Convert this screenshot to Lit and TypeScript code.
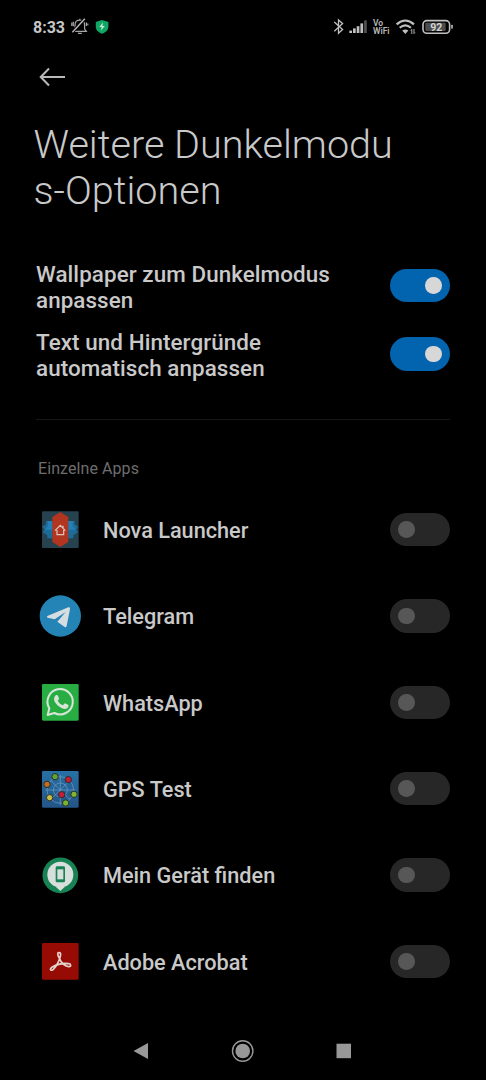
import { LitElement, html, css, svg } from 'lit';
import { customElement, property, state } from 'lit/decorators.js';
import { classMap } from 'lit/directives/class-map.js';

const novaIcon = svg`
  <rect x="36" y="34" width="110" height="110" rx="3" fill="#27424f" />
  <path d="M48 63H68V115H52V106L37 96L44 89L37 80L48 73Z" fill="#1c6b98" />
  <path d="M53 63H68V89H44L54 78Z" fill="#2380b6" />
  <path d="M134 63H112V115H130V106L144 96L138 89L144 80L134 73Z" fill="#1c6b98" />
  <path d="M129 63H112V89H138L128 78Z" fill="#2380b6" />
  <path d="M91 36L115 51V126L91 141L67 126V51Z" fill="#b23520" />
  <path d="M75 92L91 76L106 92M81 90V104H101V90M99 84V77" fill="none" stroke="#ddc5bd" stroke-width="3.6" />
`;

const telegramIcon = svg`
  <circle cx="91" cy="90" r="62" fill="#2484b5" />
  <path d="M52 90L115 64Q121 62 120 69L110 120Q108 126 103 122L82 107L107 78L74 100L53 95Q49 93 52 90Z" fill="#d5dde1" />
`;

const whatsappIcon = svg`
  <rect x="36" y="36" width="110" height="110" rx="4" fill="#28ad43" />
  <path d="M53 129L58 109A38 38 0 1 1 73 123Z" fill="none" stroke="#d7e5d9" stroke-width="6" stroke-linejoin="round" />
  <path d="M77 70C80 68 83 69 84 72L87 79Q88 81 83 86Q88 96 99 100L103 95Q105 93 108 95L114 98Q117 100 115 104C111 113 100 112 91 106C82 101 73 91 72 82Q72 74 77 70Z" fill="#d7e5d9" />
`;

const satellites = [
  { x: 75, y: 53, fill: '#65a52f' },
  { x: 115, y: 62, fill: '#c61e38' },
  { x: 51, y: 76, fill: '#c66c1e' },
  { x: 95, y: 107, fill: '#c61e38' },
  { x: 132, y: 106, fill: '#80b52e' },
  { x: 59, y: 116, fill: '#c8bd45' },
  { x: 107, y: 132, fill: '#78b52e' },
];

const gpsIcon = svg`
  <defs>
    <linearGradient id="sky" x1="0" y1="0" x2="0" y2="1">
      <stop offset="0" stop-color="#2771a5" />
      <stop offset="1" stop-color="#235487" />
    </linearGradient>
  </defs>
  <rect x="36" y="36" width="110" height="110" rx="4" fill="url(#sky)" />
  <g fill="none" stroke="#709fc4" stroke-width="2">
    <circle cx="91" cy="93" r="40" />
    <circle cx="91" cy="93" r="21" />
    <path d="M91 48V138M46 93H136M63 65L119 121M119 65L63 121" />
  </g>
  ${satellites.map((s) => svg`<circle cx=${s.x} cy=${s.y} r="9.5" fill=${s.fill} stroke="#292f28" stroke-width="3" />`)}
`;

const findDeviceIcon = svg`
  <circle cx="91" cy="91" r="53.5" fill="#178354" />
  <path d="M77 125L91 138L105 125Z" fill="#d8dedb" />
  <circle cx="91" cy="89" r="39" fill="#d8dedb" />
  <rect x="77" y="64" width="28" height="48" rx="4" fill="#178354" />
  <rect x="82" y="73" width="18" height="30" fill="#d8dedb" />
`;

const acrobatIcon = svg`
  <rect x="36" y="36" width="110" height="110" rx="4" fill="#960c04" />
  <path d="M88 65C82 62 82 72 87 80C92 92 103 105 116 107C124 108 124 99 116 98C98 95 79 101 67 108C57 114 63 122 70 115C81 105 91 83 92 70Q92 66 88 65Z" fill="none" stroke="#e5d2cc" stroke-width="5" stroke-linejoin="round" />
`;

const apps = [
  { name: 'Nova Launcher', icon: novaIcon },
  { name: 'Telegram', icon: telegramIcon },
  { name: 'WhatsApp', icon: whatsappIcon },
  { name: 'GPS Test', icon: gpsIcon },
  { name: 'Mein Gerät finden', icon: findDeviceIcon },
  { name: 'Adobe Acrobat', icon: acrobatIcon },
];

@customElement('toggle-switch')
export class ToggleSwitch extends LitElement {
  @property({ type: Boolean }) on = false;

  static styles = css`
    :host {
      display: block;
      flex: none;
    }

    .track {
      display: flex;
      align-items: center;
      box-sizing: border-box;
      width: 60.5px;
      height: 33.5px;
      padding: 0 8.5px;
      border-radius: 17px;
      background: #272727;
    }

    .knob {
      width: 16.5px;
      height: 16.5px;
      border-radius: 50%;
      background: #575757;
    }

    .track.on {
      justify-content: flex-end;
      background: #0264ae;
    }

    .on .knob {
      background: #d7d7d7;
    }
  `;

  render() {
    return html`
      <div class=${classMap({ track: true, on: this.on })}>
        <div class="knob"></div>
      </div>
    `;
  }
}

@customElement('status-bar')
export class StatusBar extends LitElement {
  static styles = css`
    :host {
      display: flex;
      align-items: center;
      justify-content: space-between;
      height: 54px;
      padding: 0 32px 0 33px;
      color: #c6c6c6;
    }

    .side {
      display: flex;
      align-items: center;
    }

    .time {
      width: 37px;
      padding-top: 1px;
      font-size: 16px;
      font-weight: 700;
      line-height: 20px;
      white-space: nowrap;
    }

    svg {
      display: block;
    }

    .vowifi {
      display: flex;
      flex-direction: column;
      width: 19px;
      padding-left: 3px;
      color: #b8b8b8;
      font-size: 8.5px;
      font-weight: 600;
      line-height: 8px;
    }
  `;

  render() {
    return html`
      <div class="side">
        <span class="time">8:33</span>
        <svg width="40" height="20" viewBox="0 0 40 20" fill="none">
          <path d="M5 12.8V8.2C5 4.8 7 3.2 9.8 3.2S14.6 4.8 14.6 8.2V12L16.3 14.3H4.5M9.8 1.8V3.2M8 16.4H11.8M1.8 5.5V9M3.3 4.8V9.3M16.4 5.6V9M17.8 6.5V8.3" stroke="#a6a6a6" stroke-width="1.2" />
          <path d="M14.8 1.8L2.4 15.2" stroke="#000" stroke-width="3.2" />
          <path d="M14.8 1.8L2.4 15.2" stroke="#b8b8b8" stroke-width="1.4" />
          <path d="M32 2.9L38.4 5V9.5C38.4 13 35.8 15.3 32 16.8C28.2 15.3 25.8 13 25.8 9.5V5Z" fill="#10a765" />
          <path d="M33 5.5L29.3 10H31.6L30.9 13.4L34.8 8.9H32.4Z" fill="#c9e4d8" />
        </svg>
      </div>
      <div class="side">
        <svg width="37" height="24" viewBox="0 0 37 24">
          <path d="M1.3 7L9.6 14.6L5.5 18.2V4.9L9.6 8.5L1.3 16.2" fill="none" stroke="#c0c0c0" stroke-width="1.3" />
          <g fill="#c0c0c0">
            <rect x="16.3" y="15.6" width="2.7" height="2.4" />
            <rect x="20" y="13.4" width="2.7" height="4.6" />
            <rect x="23.7" y="11.2" width="2.7" height="6.8" />
            <rect x="27.4" y="8.4" width="2.7" height="9.6" />
            <rect x="31.1" y="5.4" width="2.7" height="12.6" fill="#515151" />
          </g>
        </svg>
        <div class="vowifi">
          <span>Vo</span>
          <span>WiFi</span>
        </div>
        <svg width="62" height="24" viewBox="59 0 62 24" fill="none">
          <path d="M63.6 9.4Q72.3 1.6 81 9.4M66.7 12.8Q72.3 7.8 77.9 12.8" stroke="#c0c0c0" stroke-width="2.1" />
          <path d="M69.2 15.6Q72.3 13.2 75.4 15.6L72.3 18.9Z" fill="#c0c0c0" />
          <path d="M78.8 14.4V19M77.8 15.6L78.8 14.4M81 14V18.6M82 17.6L81 18.6" stroke="#c0c0c0" stroke-width=".9" />
          <rect x="90" y="5.6" width="26.6" height="12.6" rx="3.8" stroke="#c0c0c0" stroke-width="1.6" />
          <rect x="92.3" y="7.8" width="20.4" height="8.2" rx="1" fill="#4b4b4b" />
          <rect x="118.2" y="9.7" width="1.6" height="4" rx=".8" fill="#c0c0c0" />
          <text x="97.3" y="15.8" textLength="12" fill="#d2d2d2" font-size="10.5" font-weight="700">92</text>
        </svg>
      </div>
    `;
  }
}

@customElement('app-root')
export class AppRoot extends LitElement {
  @state() private apps = apps;

  static styles = css`
    :host {
      display: flex;
      flex-direction: column;
      box-sizing: border-box;
      height: 1080px;
      overflow: hidden;
      background: #000;
      color: #c9c9c9;
      font-family: Roboto, sans-serif;
    }

    svg {
      display: block;
      flex: none;
    }

    .toolbar {
      display: flex;
      align-items: center;
      height: 46px;
      padding-left: 38px;
    }

    h1 {
      margin: 21.5px 0 0;
      padding-left: 33.5px;
      font-size: 39.6px;
      font-weight: 300;
      line-height: 46.5px;
      white-space: nowrap;
    }

    .options {
      display: flex;
      flex-direction: column;
      margin-top: 37px;
    }

    .option {
      display: flex;
      align-items: center;
      justify-content: space-between;
      height: 68.4px;
      padding: 0 36px;
      font-size: 22.4px;
      font-weight: 500;
      letter-spacing: 0.08px;
      line-height: 26px;
      white-space: nowrap;
    }

    .label {
      padding-top: 2.4px;
    }

    .divider {
      height: 1px;
      margin: 31px 36px 0;
      background: #161616;
    }

    h2 {
      margin: 38.6px 0 0;
      padding-left: 38px;
      color: #6d6d6d;
      font-size: 16px;
      font-weight: 400;
      letter-spacing: 0.08px;
      line-height: 20px;
    }

    .apps {
      display: flex;
      flex-direction: column;
      margin-top: 7.6px;
    }

    .app {
      display: flex;
      align-items: center;
      height: 86.35px;
      padding: 0 36px 0 30px;
    }

    .name {
      flex: 1;
      padding: 2.4px 0 0 13px;
      font-size: 21.7px;
      font-weight: 500;
      line-height: 26px;
    }

    .nav {
      display: flex;
      justify-content: center;
      margin-top: auto;
      height: 58px;
    }
  `;

  render() {
    return html`
      <status-bar></status-bar>
      <div class="toolbar">
        <svg width="30" height="24" viewBox="0 0 30 24" fill="none" stroke="#b9b9b9" stroke-width="2">
          <path d="M27 12H3M11 3.5L2.7 12L11 20.5" />
        </svg>
      </div>
      <h1>Weitere Dunkelmodu<br />s-Optionen</h1>
      <div class="options">
        <div class="option">
          <span class="label">Wallpaper zum Dunkelmodus<br />anpassen</span>
          <toggle-switch on></toggle-switch>
        </div>
        <div class="option">
          <span class="label">Text und Hintergründe<br />automatisch anpassen</span>
          <toggle-switch on></toggle-switch>
        </div>
      </div>
      <div class="divider"></div>
      <h2>Einzelne Apps</h2>
      <div class="apps">
        ${this.apps.map((app) => html`
          <div class="app">
            <svg width="60" height="60" viewBox="0 0 180 180">${app.icon}</svg>
            <span class="name">${app.name}</span>
            <toggle-switch></toggle-switch>
          </div>
        `)}
      </div>
      <div class="nav">
        <svg width="250" height="58" viewBox="0 0 250 58" fill="#989898">
          <path d="M15.5 29L30 21V37Z" />
          <circle cx="124.7" cy="29" r="7.3" />
          <circle cx="124.7" cy="29" r="10.2" fill="none" stroke="#989898" stroke-width="1.4" />
          <rect x="218.5" y="21.7" width="14.5" height="14.5" />
        </svg>
      </div>
    `;
  }
}
